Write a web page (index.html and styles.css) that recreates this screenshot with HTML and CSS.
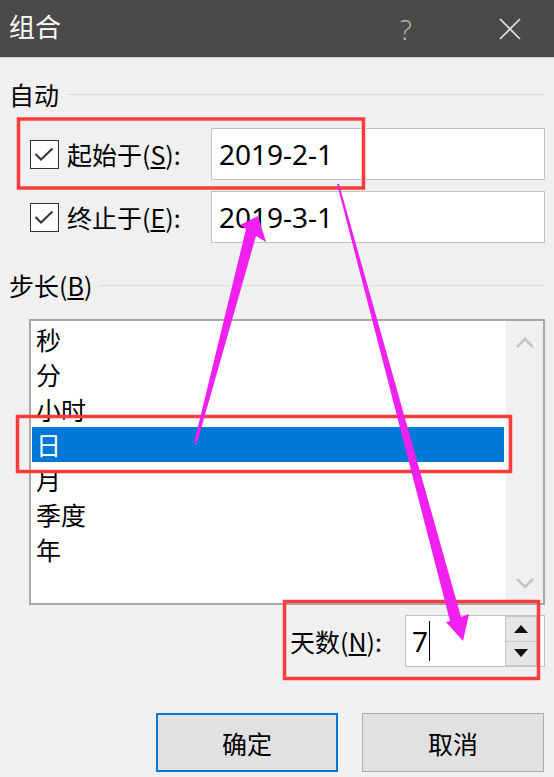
FILE: index.html
```html
<!DOCTYPE html>
<html lang="zh-CN">
<head>
    <meta charset="UTF-8">
    <title>组合</title>
    <link rel="stylesheet" href="styles.css">
</head>
<body>
<div class="dialog">
    <div class="titlebar">
        <div class="title">组合</div>
        <div class="tb-help">?</div>
        <div class="tb-close">
            <svg width="24" height="24" viewBox="0 0 24 24"><path d="M2 2 L22 22 M22 2 L2 22" stroke="#e2e2e2" stroke-width="1.6" fill="none"/></svg>
        </div>
    </div>

    <div class="content">
        <div class="group-title group-auto">
            <span>自动</span>
            <div class="rule"></div>
        </div>

        <div class="row row-start">
            <div class="checkbox">
                <svg width="29" height="29" viewBox="0 0 29 29"><path d="M5.5 15 L11 20.5 L22.5 9.5" stroke="#333" stroke-width="2" fill="none"/></svg>
            </div>
            <label class="row-label">起始于(<u>S</u>):</label>
            <div class="textbox">2019-2-1</div>
        </div>

        <div class="row row-end">
            <div class="checkbox">
                <svg width="29" height="29" viewBox="0 0 29 29"><path d="M5.5 15 L11 20.5 L22.5 9.5" stroke="#333" stroke-width="2" fill="none"/></svg>
            </div>
            <label class="row-label">终止于(<u>E</u>):</label>
            <div class="textbox">2019-3-1</div>
        </div>

        <div class="group-title group-step">
            <span>步长(<u>B</u>)</span>
            <div class="rule"></div>
        </div>

        <div class="listbox">
            <ul class="items">
                <li>秒</li>
                <li>分</li>
                <li>小时</li>
                <li class="selected">日</li>
                <li>月</li>
                <li>季度</li>
                <li>年</li>
            </ul>
            <div class="scrollbar">
                <svg width="20" height="12" viewBox="0 0 20 12"><path d="M2 10 L10 2 L18 10" stroke="#c4c4c4" stroke-width="2.6" fill="none"/></svg>
                <svg width="20" height="12" viewBox="0 0 20 12"><path d="M2 2 L10 10 L18 2" stroke="#c4c4c4" stroke-width="2.6" fill="none"/></svg>
            </div>
        </div>

        <div class="spin-row">
            <label class="row-label">天数(<u>N</u>):</label>
            <div class="spinbox">
                <div class="spin-value">7<span class="caret"></span></div>
                <div class="spin-buttons">
                    <div class="spin-btn"><svg width="14" height="8" viewBox="0 0 14 8"><path d="M0 8 L7 0 L14 8 Z" fill="#111"/></svg></div>
                    <div class="spin-btn"><svg width="14" height="8" viewBox="0 0 14 8"><path d="M0 0 L7 8 L14 0 Z" fill="#111"/></svg></div>
                </div>
            </div>
        </div>

        <div class="buttons">
            <button class="btn btn-default">确定</button>
            <button class="btn">取消</button>
        </div>
    </div>

    <!-- annotation overlay -->
    <svg class="marks" width="554" height="777" viewBox="0 0 554 777">
        <rect x="18.5" y="119" width="345" height="69" fill="none" stroke="#ff3c3c" stroke-width="3.5"/>
        <rect x="17.5" y="416.5" width="493" height="55" fill="none" stroke="#ff3c3c" stroke-width="3.5"/>
        <rect x="284.5" y="601.5" width="254" height="77" fill="none" stroke="#ff3c3c" stroke-width="3.5"/>
        <polygon points="194,443 246,229 240,225 258,216 266,242 256,236 197,443" fill="#f020f0"/>
        <polygon points="337,184 450,621 446,622 463,641 469,614 461,617 339,184" fill="#f020f0"/>
    </svg>
</div>
</body>
</html>
```

FILE: styles.css
```css
body {
    margin: 0;
    background-color: #f0f0f0;
    font-family: "Noto Sans CJK SC", "Noto Sans", sans-serif;
    color: #000;
}
.dialog {
    position: relative;
    width: 554px;
    height: 777px;
    overflow: hidden;
}
.titlebar {
    display: flex;
    align-items: center;
    height: 57px;
    padding: 0 8px 0 9px;
    background-color: #4b4a48;
    border-bottom: 1px solid #c9c9c9;
}
.title {
    flex: 1;
    margin-top: -6px;
    color: #fff;
    font-size: 26px;
}
.tb-help {
    width: 56px;
    margin-right: 40px;
    text-align: center;
    color: #b0b0b0;
    font-family: "Noto Sans", sans-serif;
    font-size: 28px;
    font-weight: 300;
}
.tb-close {
    width: 72px;
    display: flex;
    justify-content: center;
}
.content {
    padding: 0 9px;
}
.group-title {
    display: flex;
    align-items: center;
    height: 30px;
    font-size: 25px;
}
.group-title .rule {
    flex: 1;
    height: 1px;
    margin-left: 7px;
    background-color: #dcdcdc;
}
.group-auto {
    margin-top: 21px;
}
.group-step {
    margin-top: 27px;
}
.row {
    display: flex;
    align-items: center;
}
.row-start {
    margin-top: 19px;
}
.row-end {
    margin-top: 11px;
}
.checkbox {
    width: 29px;
    height: 29px;
    margin-left: 21px;
    margin-right: 8px;
    box-sizing: border-box;
    border: 1.5px solid #333;
    background-color: #fff;
}
.checkbox svg {
    display: block;
    margin: -1.5px;
}
.row-label {
    font-size: 25px;
}
.row .row-label {
    flex: 1;
}
.textbox {
    width: 334px;
    height: 52px;
    box-sizing: border-box;
    padding-left: 7px;
    border: 1px solid #c3c3c3;
    background-color: #fff;
    font-family: "Noto Sans", "Noto Sans CJK SC", sans-serif;
    font-size: 28px;
    line-height: 50px;
}
.listbox {
    display: flex;
    height: 286px;
    margin: 19px 0 0 20px;
    box-sizing: border-box;
    border: 2px solid #a8a8a8;
    background-color: #fff;
}
.items {
    flex: 1;
    list-style: none;
    margin: 0;
    padding: 1px 2px 0 1px;
}
.items li {
    height: 35px;
    line-height: 35px;
    padding-left: 4px;
    font-size: 25px;
}
.items li.selected {
    background-color: #0078d7;
    color: #fff;
}
.scrollbar {
    width: 37px;
    display: flex;
    flex-direction: column;
    justify-content: space-between;
    align-items: center;
    padding: 16px 0 14px;
    background-color: #f0f0f0;
}
.scrollbar svg {
    display: block;
}
.spin-row {
    display: flex;
    justify-content: flex-end;
    align-items: center;
    margin-top: 10px;
}
.spin-row .row-label {
    margin-right: 23px;
}
.spinbox {
    display: flex;
    align-items: center;
    width: 140px;
    height: 52px;
    box-sizing: border-box;
    border: 1px solid #c3c3c3;
    background-color: #fff;
}
.spin-value {
    flex: 1;
    display: flex;
    align-items: center;
    padding-left: 6px;
    font-family: "Noto Sans", sans-serif;
    font-size: 28px;
}
.caret {
    display: inline-block;
    width: 1px;
    height: 40px;
    margin-left: 1px;
    background-color: #000;
}
.spin-buttons {
    display: flex;
    flex-direction: column;
    width: 30px;
    height: 48px;
    margin-right: 7px;
    border: 1px solid #c8c8c8;
}
.spin-btn {
    flex: 1;
    display: flex;
    align-items: center;
    justify-content: center;
    background-color: #e6e6e6;
}
.spin-btn + .spin-btn {
    border-top: 1px solid #c8c8c8;
}
.buttons {
    display: flex;
    justify-content: flex-end;
    gap: 24px;
    margin-top: 46px;
    padding-right: 1px;
}
.btn {
    width: 182px;
    height: 59px;
    border: 1px solid #adadad;
    background-color: #e1e1e1;
    font-family: "Noto Sans CJK SC", sans-serif;
    font-size: 25px;
    color: #000;
}
.btn-default {
    border: 2px solid #0078d7;
}
.marks {
    position: absolute;
    top: 0;
    left: 0;
    pointer-events: none;
}
```
